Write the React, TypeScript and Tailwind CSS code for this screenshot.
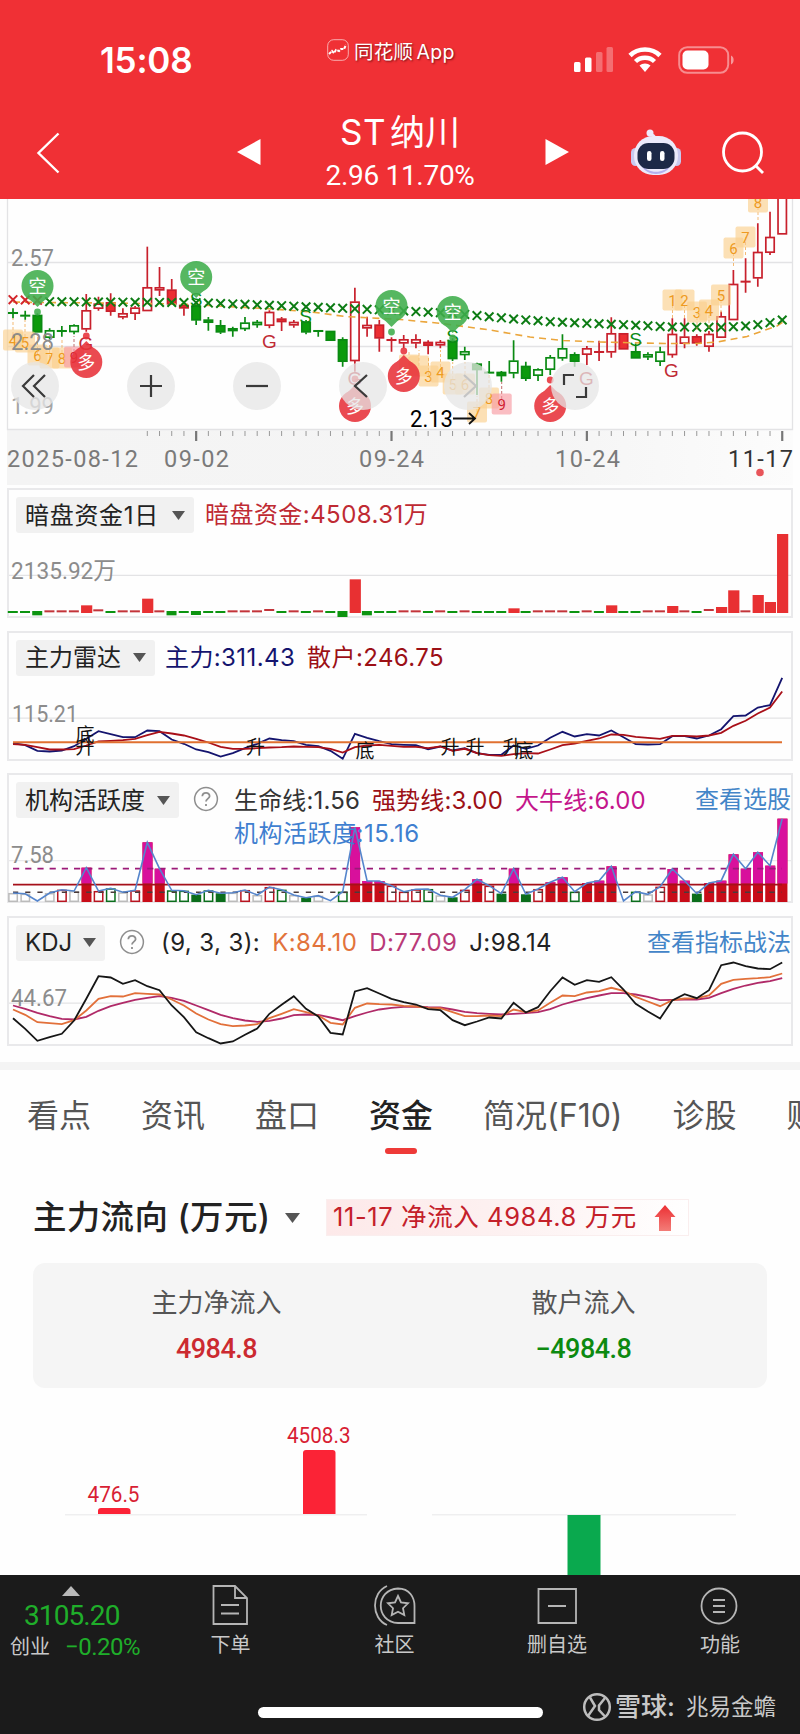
import type { ReactNode } from "react";

const RED = "#c8202c";
const GREEN = "#0a8a12";

// every chart shares the same 64 trading days
const DAYS = 64;
const dayX = (i: number) => 13 + i * 12.21;
const days = Array.from({ length: DAYS }, (_, i) => i);

type Kind = "r" | "R" | "g" | "G";
// [kind, high, top of body, bottom of body, low], in thirds of a pixel
type Candle = [Kind, number, number, number, number];

const candles: Candle[] = [
  ["G", 340, 352, 356, 370], ["G", 347, 360, 364, 374], ["G", 355, 360, 412, 412], ["g", 400, 406, 428, 432],
  ["G", 393, 406, 410, 425], ["g", 388, 391, 411, 418], ["r", 297, 346, 403, 410], ["r", 305, 326, 341, 347],
  ["R", 295, 322, 350, 362], ["r", 340, 355, 367, 373], ["r", 333, 338, 356, 375], ["r", 155, 277, 348, 348],
  ["r", 216, 277, 286, 303], ["R", 252, 284, 328, 330], ["R", 325, 330, 340, 362], ["G", 325, 332, 376, 390],
  ["G", 366, 374, 383, 407], ["G", 375, 391, 412, 417], ["g", 395, 400, 408, 425], ["g", 366, 383, 402, 408],
  ["g", 375, 381, 390, 398], ["r", 346, 351, 392, 400], ["R", 366, 371, 381, 408], ["r", 375, 381, 391, 398],
  ["G", 375, 380, 412, 418], ["G", 405, 406, 410, 425], ["G", 408, 408, 437, 437], ["G", 427, 433, 500, 515],
  ["r", 278, 320, 498, 530], ["r", 365, 390, 400, 425], ["R", 375, 389, 430, 470], ["R", 427, 433, 437, 470],
  ["r", 420, 433, 445, 460], ["r", 418, 433, 445, 460], ["R", 436, 441, 452, 478], ["r", 435, 441, 451, 460],
  ["G", 430, 437, 492, 498], ["g", 455, 469, 480, 495], ["G", 503, 506, 525, 600], ["G", 498, 531, 534, 534],
  ["G", 528, 531, 543, 560], ["g", 436, 497, 535, 550], ["G", 500, 513, 551, 558], ["g", 520, 523, 542, 558],
  ["g", 480, 487, 524, 540], ["g", 418, 460, 490, 497], ["G", 472, 478, 500, 515], ["r", 453, 460, 479, 510],
  ["R", 437, 469, 472, 498], ["r", 367, 415, 472, 488], ["R", 415, 415, 463, 463], ["G", 445, 469, 490, 490],
  ["g", 472, 478, 487, 495], ["g", 455, 470, 500, 513], ["r", 370, 417, 480, 488], ["r", 370, 425, 446, 460],
  ["R", 418, 424, 445, 452], ["r", 408, 417, 455, 470], ["r", 350, 364, 428, 428], ["r", 225, 267, 375, 375],
  ["R", 190, 258, 261, 293], ["r", 85, 171, 250, 275], ["r", 50, 126, 173, 180], ["r", -20, -20, 118, 118],
];

// trend crosses: anchors [day, y], interpolated between
const trend = [
  [0, 314], [2, 316], [3, 320], [15, 323], [22, 332], [27, 340], [31, 346], [36, 355], [41, 372],
  [44, 380], [47, 385], [50, 389], [54, 396], [58, 397], [60, 393], [61, 389], [62, 383], [63, 375],
];

function trendY(day: number) {
  const k = Math.max(1, trend.findIndex(([d]) => d >= day));
  const [d0, y0] = trend[k - 1];
  const [d1, y1] = trend[k];
  return y0 + ((y1 - y0) * (day - d0)) / (d1 - d0);
}

const toPoints = (values: number[], base: number) =>
  values.map((v, i) => `${dayX(i).toFixed(1)},${(base + v / 3).toFixed(1)}`).join(" ");

const axisFont = 'Roboto, "Noto Sans CJK SC", sans-serif';

interface LabelProps {
  x: number;
  y: number;
  w: number;
  children: string;
  fill?: string;
  size?: number;
  spaced?: boolean;
}

function AxisLabel({ x, y, w, children, fill = "#8c8c8c", size = 24, spaced }: LabelProps) {
  return (
    <text
      x={x}
      y={y}
      fontSize={size}
      fill={fill}
      fontFamily={axisFont}
      textLength={w}
      lengthAdjust={spaced ? "spacing" : "spacingAndGlyphs"}
    >
      {children}
    </text>
  );
}

function Pin({ x, y, up, dotY }: { x: number; y: number; up?: boolean; dotY?: number }) {
  const color = up ? "#e8323a" : "#3fae4c";
  const tail = up ? `M${x - 8} ${y - 13}L${x} ${y - 21}L${x + 8} ${y - 13}Z` : `M${x - 8} ${y + 13}L${x} ${y + 21}L${x + 8} ${y + 13}Z`;
  return (
    <g fill={color} opacity={0.88}>
      <circle cx={x} cy={y} r={16} />
      <path d={tail} />
      {dotY && <circle cx={x} cy={dotY} r={3.4} />}
      <text x={x} y={y + 6.5} fontSize={18} fill="#fff" textAnchor="middle" fontFamily={axisFont}>
        {up ? "多" : "空"}
      </text>
    </g>
  );
}

// nine-turn counters: [label, x, y, y of the candle it points to]
const counters: [string, number, number, number][] = [
  ["4", 13, 340, 318], ["5", 25, 342, 320], ["6", 37.5, 355, 334], ["7", 49.5, 358, 340], ["8", 62, 358, 338],
  ["9", 74, 357, 336], ["", 409, 365, 350], ["", 419, 366, 350], ["3", 428.5, 376, 356], ["4", 440.5, 372, 350],
  ["5", 452.7, 384, 362], ["6", 465, 384, 362], ["7", 477, 412, 396], ["8", 489, 398, 374], ["9", 501.7, 404, 382],
  ["1", 672.5, 300, 320], ["2", 684.5, 300, 320], ["3", 697, 312, 332], ["4", 709, 310, 330], ["5", 721, 295, 314],
  ["6", 733.5, 248, 268], ["7", 745.5, 237, 257], ["8", 758, 202, 222],
];

const marks: [string, number, number][] = [
  ["G", 86, 350], ["G", 269.5, 348], ["G", 355, 385], ["G", 586.5, 385], ["G", 671.5, 377],
  ["S", 196, 306], ["S", 305.5, 323], ["S", 452.5, 343], ["S", 635.5, 346],
];

function CandleChart() {
  const y = (v: number) => 195 + v / 3;
  return (
    <svg width="800" height="289" viewBox="0 199 800 289" className="block">
      <defs>
        <linearGradient id="axis" x1="0" x2="1" y1="0" y2="0">
          <stop offset="0" stopColor="#f4f4f4" />
          <stop offset="0.7" stopColor="#f5f5f5" />
          <stop offset="1" stopColor="#fcfcfc" />
        </linearGradient>
      </defs>
      <rect x="7" y="429" width="786" height="56" fill="url(#axis)" />
      <g fill="none" stroke="#e3e3e5" strokeWidth="1.3">
        <path d="M7.5 199V429.5H792.5V199M8 262.5H792M8 346.5H792" />
      </g>
      {days.slice(11).map((i) => {
        const major = (i + 1) % 16 === 0;
        return (
          <path
            key={i}
            d={`M${dayX(i)} 431V${major ? 441 : 436}`}
            stroke={major ? "#777" : "#999"}
            strokeWidth={major ? 2.2 : 1}
          />
        );
      })}
      {candles.map(([kind, high, top, bottom, low], i) => {
        const x = dayX(i);
        const color = kind.toLowerCase() === "r" ? RED : GREEN;
        const hollow = kind === "r" || kind === "g";
        return (
          <g key={i} stroke={color} strokeWidth="1.7">
            <path d={`M${x} ${y(high)}V${y(top)}M${x} ${y(bottom)}V${y(low)}`} />
            <rect
              x={x - 4.2}
              y={y(top) + 0.5}
              width={8.4}
              height={Math.max(0.3, (bottom - top) / 3 - 1)}
              fill={hollow ? "none" : kind === "R" ? "#ec2e32" : "#0c9a0c"}
            />
          </g>
        );
      })}
      <polyline
        points="13,302 40,302.5 110,303 180,304 265,308.5 312,312 345,316.5 400,319.5 442,323.5 490,330 530,337 563,340.5 600,342 665,343.5 697,343.5 717,342 747,336.5 777,326 783,322"
        fill="none"
        stroke="#eba63c"
        strokeWidth="1.6"
        strokeDasharray="7 5"
      />
      {days.map((i) => {
        const x = dayX(i);
        const cy = y(trendY(i));
        return (
          <path
            key={i}
            d={`M${x - 4.3} ${cy - 4.3}L${x + 4.3} ${cy + 4.3}M${x + 4.3} ${cy - 4.3}L${x - 4.3} ${cy + 4.3}`}
            stroke={i < 3 ? "#d3262b" : "#0d7c14"}
            strokeWidth="2"
          />
        );
      })}
      {counters.map(([label, x, cy, target], i) => {
        const pink = label === "9";
        return (
          <g key={i}>
            <path d={`M${x} ${cy}V${target}`} stroke={pink ? "#a33" : "#f0a03c"} strokeDasharray="3 2" opacity="0.7" />
            <rect x={x - 10} y={cy - 10.5} width="20" height="21" rx="2" fill={pink ? "#f89aa2" : "#fbcf8d"} opacity="0.65" />
            <text x={x} y={cy + 5.5} fontSize="15" textAnchor="middle" fill={pink ? "#d02030" : "#ee9a22"} fontFamily={axisFont}>
              {label}
            </text>
          </g>
        );
      })}
      {marks.map(([letter, x, by], i) => (
        <text
          key={i}
          x={x}
          y={by}
          fontSize="19"
          textAnchor="middle"
          fill={letter === "G" ? "#c02a35" : "#0b8a14"}
          fontFamily='"Liberation Sans", sans-serif'
        >
          {letter}
        </text>
      ))}
      <Pin x={37.5} y={286} dotY={312} />
      <Pin x={196.2} y={277} />
      <Pin x={391.5} y={306} dotY={332} />
      <Pin x={452.7} y={312} dotY={338} />
      <Pin x={86.3} y={362} up dotY={336} />
      <Pin x={355} y={406} up dotY={379} />
      <Pin x={403.8} y={376} up dotY={351} />
      <Pin x={550.2} y={406} up dotY={380} />
      <AxisLabel x={11} y={265.5} w={43}>2.57</AxisLabel>
      <AxisLabel x={11} y={349.5} w={43}>2.28</AxisLabel>
      <AxisLabel x={11} y={413.5} w={43} fill="#a5a5a5">1.99</AxisLabel>
      <AxisLabel x={410} y={427} w={43} fill="#000">2.13</AxisLabel>
      <path d="M453 418.5H475M469 413L475 418.5L469 424" fill="none" stroke="#111" strokeWidth="1.8" />
      <AxisLabel x={7} y={466.5} w={131} fill="#7a7a7a" size={23.5} spaced>2025-08-12</AxisLabel>
      <AxisLabel x={164} y={466.5} w={65} fill="#7a7a7a" size={23.5} spaced>09-02</AxisLabel>
      <AxisLabel x={359} y={466.5} w={65} fill="#7a7a7a" size={23.5} spaced>09-24</AxisLabel>
      <AxisLabel x={555} y={466.5} w={65} fill="#7a7a7a" size={23.5} spaced>10-24</AxisLabel>
      <AxisLabel x={728} y={466.5} w={65} fill="#333" size={23.5} spaced>11-17</AxisLabel>
      <circle cx="760" cy="472.5" r="3.8" fill="#e8555a" />
    </svg>
  );
}

const controls = [
  { name: "earlier", d: "M23 13L12 24L23 35M34 13L23 24L34 35", gap: "" },
  { name: "zoom in", d: "M24 13V35M13 24H35", gap: "ml-[68px]" },
  { name: "zoom out", d: "M13 24H35", gap: "ml-[58px]" },
  { name: "previous", d: "M28 13L16 24L28 35", gap: "ml-[58px]" },
  { name: "next", d: "M20 13L32 24L20 35", gap: "ml-[57px]", off: true },
  { name: "full screen", d: "M23 13H13V23M25 35H35V25", gap: "ml-[59px]" },
];

function ChartControls() {
  return (
    <div className="absolute left-[11px] top-[163px] flex">
      {controls.map((c) => (
        <button key={c.name} aria-label={c.name} className={`size-12 rounded-full bg-[#e6e6e6]/75 ${c.gap}`}>
          <svg width="48" height="48" fill="none" stroke={c.off ? "#c4c4c4" : "#3a3a3a"} strokeWidth="2.2">
            <path d={c.d} />
          </svg>
        </button>
      ))}
    </div>
  );
}

interface PanelProps {
  title: string;
  chip: string;
  top: number;
  help?: boolean;
  legend: ReactNode;
  link?: string;
  children: ReactNode;
}

function Panel({ title, chip, top, help, legend, link, children }: PanelProps) {
  return (
    <section className="mx-[7px] grid h-[130px] border-2 border-[#e9e9eb]">
      <svg width="782" height="126" viewBox={`9 ${top} 782 126`} className="overflow-visible [grid-area:1/1]">
        {children}
      </svg>
      <div className="z-10 flex h-[50px] items-start whitespace-nowrap pl-[7px] pt-[7px] text-[24px] leading-[35px] [grid-area:1/1]">
        <button className={`flex h-9 shrink-0 items-center justify-between rounded-[3px] bg-[#f1f1f1] px-[9px] text-[#222] ${chip}`}>
          {title}
          <svg width="13" height="9" fill="#555">
            <path d="M0 0H13L6.5 9Z" />
          </svg>
        </button>
        {help && (
          <svg width="26" height="26" className="ml-[14px] mt-[4px] shrink-0" fill="none" stroke="#8e8e8e" strokeWidth="1.5">
            <circle cx="13" cy="13" r="11.4" />
            <path d="M9.3 10.3C9.5 5.7 16.8 5.8 16.6 10.3C16.5 12.6 13 12.8 13 15.6M13 18V20" strokeWidth="1.8" />
          </svg>
        )}
        {legend}
        {link && <a className="ml-auto text-[#4385c8]">{link}</a>}
      </div>
    </section>
  );
}

const fundKinds = "gggrrrrrgrrrrgggggrrrrgrgrggrgggrrgrgrgggrgrrrgrgrggrrrrgrrrrrrr";
// bars that stand out of the flat row: day -> edge
const fundPeaks: Record<number, number> = {
  2: 391, 6: 361, 7: 373, 11: 341, 13: 391, 15: 390, 21: 372, 27: 396, 28: 283, 29: 391, 41: 370,
  49: 361, 54: 363, 57: 372, 58: 366, 59: 316, 61: 330, 62: 351, 63: 147,
};

function FundBars() {
  return (
    <>
      <path d="M9 575.3H791" stroke="#e3e3e5" strokeWidth="1.2" />
      {days.map((i) => {
        const red = fundKinds[i] === "r";
        const peak = fundPeaks[i];
        const tall = red && peak !== undefined && peak < 371;
        const y0 = red ? (peak ?? 376) : 378;
        const y1 = red ? (tall ? 384 : y0 + 6) : (peak ?? 384);
        return (
          <rect
            key={i}
            x={dayX(i) - 5.2}
            y={485 + y0 / 3}
            width={tall ? 11.2 : 10}
            height={(y1 - y0) / 3}
            fill={red ? (tall ? "#e83032" : "#c3343a") : "#0c9410"}
          />
        );
      })}
      <AxisLabel x={11} y={579} w={105}>2135.92万</AxisLabel>
    </>
  );
}

const mainForce = [
  773, 779, 796, 798, 795, 782, 760, 737, 746, 755, 755, 735, 737, 762, 775, 792, 800, 813, 803, 788, 775, 759, 764, 767,
  778, 782, 796, 820, 745, 757, 767, 776, 778, 779, 791, 783, 795, 788, 803, 808, 808, 780, 790, 780, 757, 739, 753, 746,
  750, 735, 755, 776, 777, 776, 752, 752, 759, 750, 731, 692, 690, 666, 659, 577,
];
const retail = [
  776, 778, 785, 792, 792, 791, 780, 768, 766, 764, 760, 749, 739, 744, 750, 760, 771, 784, 790, 790, 788, 786, 785, 783,
  784, 785, 790, 801, 785, 780, 778, 781, 784, 784, 788, 783, 796, 790, 803, 809, 811, 806, 803, 804, 792, 779, 774, 766,
  759, 747, 748, 754, 757, 760, 751, 751, 753, 750, 742, 721, 706, 684, 666, 618,
];
const radarMarks: [string, number, number][] = [
  ["底", 85, 741], ["升", 85, 753], ["升", 255.5, 753], ["底", 365, 757],
  ["升", 450, 753], ["升", 475, 753], ["升", 512, 753], ["底", 524, 757],
];

function RadarLines() {
  return (
    <>
      <path d="M9 717.7H791" stroke="#e3e3e5" strokeWidth="1.2" />
      <AxisLabel x={12} y={721} w={66}>115.21</AxisLabel>
      <g fill="none" strokeWidth="1.8">
        <polyline points={toPoints(mainForce, 485)} stroke="#14146e" />
        <polyline points={toPoints(retail, 485)} stroke="#a80f18" />
        <path d="M13 741.7H782" stroke="#e07030" strokeWidth="2" />
      </g>
      {radarMarks.map(([t, x, y], i) => (
        <text key={i} x={x} y={y} fontSize="19" fill="#111" textAnchor="middle" fontFamily={axisFont}>
          {t}
        </text>
      ))}
    </>
  );
}

// w: idle, r/g: hollow, R/G: filled, -: no bar
const activityKinds = "ww-wrwRrgwrRRggGgGwrwrgwGw-gRRRrrrgwGrRrGRGrRRgRRR-gwrRRGRRRRRRR";
const activity = [
  384, 386, 408, 384, 374, 378, 308, 378, 370, 382, 376, 232, 311, 376, 377, 389, 376, 385, 383, 375, 390, 366, 374, 390,
  398, 392, 407, 380, 187, 348, 348, 362, 380, 373, 372, 391, 397, 374, 343, 362, 386, 311, 388, 372, 352, 337, 380, 354,
  347, 304, 408, 380, 388, 365, 312, 347, 386, 354, 347, 268, 311, 262, 302, 161,
];

function ActivityBars() {
  const floor = 902;
  return (
    <>
      <path d="M9 860.7H791" stroke="#e9e9eb" strokeWidth="1.2" />
      {days.map((i) => {
        const kind = activityKinds[i];
        const x = dayX(i) - 4.8;
        const top = 765 + activity[i] / 3;
        if (kind === "-") return null;
        if (kind === "R") {
          return (
            <g key={i}>
              <rect x={x} y={top} width="10" height={floor - top} fill="#c80c18" />
              <rect x={x} y={top} width="10" height={Math.max(0, 883.5 - top)} fill="#d8109c" />
            </g>
          );
        }
        const color = kind === "w" ? "#bbb" : kind === "r" ? "#b81420" : "#0b6e1c";
        return (
          <rect
            key={i}
            x={x + 0.7}
            y={top + 0.7}
            width="8.4"
            height={floor - top - 1.4}
            fill={kind === "G" ? color : "#fff"}
            stroke={color}
            strokeWidth="1.5"
          />
        );
      })}
      <path d="M13 868.7H782" stroke="#9c1a78" strokeWidth="1.8" strokeDasharray="6.2 6" />
      <path d="M13 884.7H782" stroke="#a5101a" strokeWidth="1.8" />
      <path d="M13 892.3H782" stroke="#4a3a3a" strokeWidth="1.4" strokeDasharray="5.2 7" />
      <polyline points={toPoints(activity, 765)} fill="none" stroke="#5585cc" strokeWidth="1.6" />
      <AxisLabel x={11} y={863} w={43}>7.58</AxisLabel>
    </>
  );
}

const kLine = [
  732, 748, 770, 773, 776, 764, 735, 700, 692, 693, 683, 685, 687, 702, 720, 744, 762, 776, 782, 780, 776, 758, 745, 731,
  740, 750, 772, 777, 727, 714, 716, 717, 721, 723, 727, 728, 740, 752, 752, 750, 752, 732, 740, 735, 712, 690, 692, 681,
  677, 667, 676, 694, 708, 722, 704, 699, 698, 690, 655, 643, 640, 638, 635, 624,
];
const dLine = [
  720, 730, 742, 752, 760, 762, 754, 736, 722, 712, 703, 697, 692, 697, 706, 720, 734, 748, 758, 765, 769, 766, 759, 749,
  747, 748, 756, 764, 752, 741, 732, 727, 724, 723, 725, 726, 732, 739, 743, 745, 747, 745, 743, 740, 731, 717, 707, 698,
  690, 683, 683, 687, 694, 704, 703, 702, 702, 697, 683, 670, 660, 652, 647, 638,
];
const jLine = [
  758, 790, 826, 815, 805, 765, 700, 632, 636, 655, 644, 662, 674, 720, 755, 800, 818, 834, 828, 808, 789, 745, 718, 692,
  730, 753, 802, 807, 678, 668, 684, 700, 710, 717, 731, 734, 764, 779, 768, 756, 759, 712, 741, 725, 677, 636, 658, 644,
  649, 635, 672, 715, 738, 759, 705, 686, 698, 674, 599, 591, 602, 609, 611, 591,
];

function KdjLines() {
  return (
    <>
      <path d="M9 1002.7H791" stroke="#e3e3e5" strokeWidth="1.2" />
      <AxisLabel x={11} y={1005.5} w={56}>44.67</AxisLabel>
      <g fill="none" strokeWidth="1.8">
        <polyline points={toPoints(dLine, 765)} stroke="#b02a68" />
        <polyline points={toPoints(kLine, 765)} stroke="#e2703a" />
        <polyline points={toPoints(jLine, 765)} stroke="#161616" />
      </g>
    </>
  );
}

function StatusBar() {
  return (
    <div className="flex h-[100px] items-start">
      <div className="ml-[100px] mt-[38px] w-[227px] text-[35px] font-semibold leading-[44px] tracking-[-0.2px]">15:08</div>
      <div className="mt-[38px] flex w-[247px] items-center gap-[5px] text-[19.5px] leading-[28px] tracking-[0.3px] [text-shadow:1px_1px_2px_#7a1015]">
        <svg width="22" height="22" className="-mt-[4px]" fill="none" stroke="#fff">
          <rect x="0.7" y="0.7" width="20.6" height="20.6" rx="6" strokeOpacity="0.6" />
          <path d="M2 15L5 12L7 14L9 11L12 12L14 10L17 10L19 6" strokeWidth="2" strokeDasharray="3 1" />
        </svg>
        <span>
          同花顺<span className="ml-[3px]">App</span>
        </span>
      </div>
      <svg width="40" height="26" className="mt-[47px]" fill="#fff">
        <rect x="0" y="15" width="6.5" height="10" rx="1.5" />
        <rect x="11" y="10.5" width="6.5" height="14.5" rx="1.5" />
        <rect x="22" y="5" width="6.5" height="20" rx="1.5" opacity="0.3" />
        <rect x="32.5" y="0" width="6.5" height="25" rx="1.5" opacity="0.3" />
      </svg>
      <svg width="34" height="26" className="ml-[14px] mt-[47px]" fill="none" stroke="#fff">
        <path d="M2 8.5C10 0.5 24 0.5 32 8.5" strokeWidth="4.6" />
        <path d="M7.5 14.5C12.5 9.5 21.5 9.5 26.5 14.5" strokeWidth="4.4" />
        <path d="M11.5 18.5C14.5 15.8 19.5 15.8 22.5 18.5L17 25Z" fill="#fff" stroke="none" />
      </svg>
      <svg width="58" height="28" className="ml-[16px] mt-[46px]">
        <rect x="1.2" y="1.2" width="49" height="25.6" rx="8" fill="none" stroke="#fff" strokeOpacity="0.45" strokeWidth="2" />
        <rect x="4.5" y="4.5" width="26" height="19" rx="5" fill="#fff" />
        <path d="M53 9.5C56.5 11 56.5 17 53 18.5Z" fill="#fff" fillOpacity="0.5" />
      </svg>
    </div>
  );
}

function Robot() {
  return (
    <svg width="50" height="48" className="block">
      <path d="M24 10C24 5 20 7 19 4" fill="none" stroke="#e9e6fb" strokeWidth="2.5" />
      <circle cx="19" cy="4" r="3.5" fill="#efe9fb" />
      <rect x="0" y="19" width="9" height="18" rx="4.5" fill="#c9c9ef" />
      <rect x="41" y="19" width="9" height="18" rx="4.5" fill="#c9c9ef" />
      <rect x="3" y="7" width="44" height="39" rx="19" fill="#eceafb" />
      <path d="M10 36C18 45 32 45 40 36C34 48 16 48 10 36Z" fill="#b4b0ee" />
      <rect x="6.500" y="14" width="37" height="26" rx="11" fill="#1d2947" />
      <rect x="16" y="22" width="4.5" height="10" rx="2.2" fill="#fff" />
      <rect x="29" y="22" width="4.5" height="10" rx="2.2" fill="#fff" />
    </svg>
  );
}

function StockHeader() {
  return (
    <header className="h-[199px] bg-[#f03035] text-white">
      <StatusBar />
      <div className="flex h-[98px] items-start">
        <svg width="24" height="44" className="ml-[36px] mt-[31px]" fill="none" stroke="#fff" strokeWidth="2.4">
          <path d="M22.5 2.5L2.5 22L22.5 41.5" />
        </svg>
        <svg width="24" height="26" className="ml-[177px] mt-[39px]" fill="#fff">
          <path d="M23.5 0V26L0 13Z" />
        </svg>
        <div className="w-[284px] pr-[6px] text-center">
          <div className="mt-[8px] text-[35px] leading-[48px]">
            <span className="mr-[4px] tracking-[0.5px]">ST</span>纳川
          </div>
          <div className="mt-[5px] font-[Roboto] text-[28px] leading-[30px] tracking-[-0.3px]">2.96 11.70%</div>
        </div>
        <svg width="24" height="26" className="mt-[39px]" fill="#fff">
          <path d="M0.5 0V26L24 13Z" />
        </svg>
        <div className="ml-[62px] mt-[29px]">
          <Robot />
        </div>
        <svg width="44" height="44" className="ml-[40px] mt-[31px]" fill="none" stroke="#fff" strokeWidth="2.8">
          <circle cx="21.5" cy="21" r="19" />
          <path d="M35 35L42 42" />
        </svg>
      </div>
    </header>
  );
}

const tabs = ["看点", "资讯", "盘口", "资金", "简况(F10)", "诊股", "财务"];

function Tabs() {
  return (
    <nav className="flex h-[97px] gap-[50px] overflow-hidden whitespace-nowrap pl-[27px] pt-[22px] text-[32px] leading-[48px] text-[#555]">
      {tabs.map((tab) => (
        <div key={tab} className="flex shrink-0 flex-col items-center">
          <span className={tab === "资金" ? "font-medium text-[#222]" : ""}>{tab}</span>
          {tab === "资金" && <span className="mt-[8px] h-[6px] w-8 rounded-full bg-[#ee3a38]" />}
        </div>
      ))}
    </nav>
  );
}

function FundFlow() {
  return (
    <section className="h-[408px] overflow-hidden pt-[32px]">
      <div className="flex h-[37px] items-center pl-[33px]">
        <h2 className="w-[252px] whitespace-nowrap text-[33.5px] font-medium tracking-[0.3px] text-[#222]">主力流向 (万元)</h2>
        <svg width="15" height="10" fill="#555">
          <path d="M0 0H15L7.5 10Z" />
        </svg>
        <div className="ml-[26px] flex h-[37px] w-[363px] items-center justify-between whitespace-nowrap border border-[#faeeee] bg-linear-to-r from-[#fde9e9] via-[#fdf1f1] to-white pl-[6px] pr-[12px] text-[25.5px] tracking-[0.6px] text-[#c4202a]">
          11-17 净流入 4984.8 万元
          <svg width="22" height="26">
            <defs>
              <linearGradient id="arrow" x1="0" x2="0" y1="0" y2="1">
                <stop offset="0" stopColor="#ec2f33" />
                <stop offset="1" stopColor="#f37d78" />
              </linearGradient>
            </defs>
            <path d="M11 0L21.5 12H17V26H5V12H0.5Z" fill="url(#arrow)" />
          </svg>
        </div>
      </div>
      <div className="mx-[33px] mt-[27px] grid h-[125px] grid-cols-2 rounded-xl bg-[#f5f5f5] pt-[20px] text-center">
        <div>
          <div className="text-[26px] leading-[40px] text-[#555]">主力净流入</div>
          <div className="mt-[8px] font-[Roboto] text-[27px] font-medium leading-[36px] tracking-[-0.5px] text-[#cc2a30]">4984.8</div>
        </div>
        <div>
          <div className="text-[26px] leading-[40px] text-[#555]">散户流入</div>
          <div className="mt-[8px] font-[Roboto] text-[27px] font-medium leading-[36px] tracking-[-0.5px] text-[#0d8a10]">−4984.8</div>
        </div>
      </div>
      <svg width="800" height="188" viewBox="0 1388 800 188" className="block">
        <path d="M65 1514.7H367M432 1514.7H736" stroke="#efeff0" strokeWidth="1.5" />
        <path d="M98 1514V1511Q98 1508 101 1508H127Q130.5 1508 130.5 1511V1514Z" fill="#fb2336" />
        <path d="M303 1514V1453Q303 1450 306 1450H332.5Q335.5 1450 335.5 1453V1514Z" fill="#fb2336" />
        <rect x="567.5" y="1515" width="33" height="61" fill="#0aa94e" />
        <AxisLabel x={87.5} y={1501.5} w={52} size={21.5} fill="#d81e34">476.5</AxisLabel>
        <AxisLabel x={287} y={1443} w={63.5} size={21.5} fill="#d81e34">4508.3</AxisLabel>
      </svg>
    </section>
  );
}

const actions = [
  { label: "下单", width: "w-[153px]", icon: <path d="M3.5 1H25L37 13V39H3.5ZM25 1V13H37M11 20H29M11 28.5H29" /> },
  {
    label: "社区",
    width: "w-[175px]",
    icon: (
      <>
        <path d="M13 1C-3 8 -3 33 13 40" />
        <path d="M24 3.5C36 3.5 40.5 13 40.5 21V38H24C1 37 1 4.5 24 3.5Z" />
        <path d="M24 11L27 17.5L34 18.3L29 23.2L30.3 30L24 26.7L17.7 30L19 23.2L14 18.3L21 17.5Z" />
      </>
    ),
  },
  { label: "删自选", width: "w-[150px]", icon: <path d="M2.5 4H40V38H2.5ZM12 21H30" /> },
  {
    label: "功能",
    width: "w-[176px]",
    icon: (
      <>
        <circle cx="20" cy="21" r="17.5" />
        <path d="M14 15H26M14 21H26M14 27H26" />
      </>
    ),
  },
];

function BottomBar() {
  return (
    <footer className="h-[159px] bg-[#1b1b1b] text-[#c9c9c9]">
      <div className="flex h-[112px]">
        <div className="w-[154px] shrink-0 pl-[10px] pt-[11px]">
          <svg width="18" height="10" className="ml-[52px] block" fill="#b9b9b9">
            <path d="M9 0L18 10H0Z" />
          </svg>
          <div className="mt-[4px] pl-[14px] font-[Roboto] text-[28px] leading-[32px] tracking-[-0.9px] text-[#1fae2a]">3105.20</div>
          <div className="flex items-center gap-[15px] text-[20px] leading-[30px]">
            创业
            <span className="font-[Roboto] text-[24px] tracking-[-0.5px] text-[#1fae2a]">−0.20%</span>
          </div>
        </div>
        {actions.map((a) => (
          <button key={a.label} className={`flex shrink-0 flex-col items-center pt-[10px] text-[20px] leading-[28px] ${a.width}`}>
            <svg width="42" height="42" fill="none" stroke="#b5b5b5" strokeWidth="1.8">
              {a.icon}
            </svg>
            <span className="mt-[4px]">{a.label}</span>
          </button>
        ))}
      </div>
      <div className="flex items-start">
        <div className="ml-[258px] mt-[20px] h-[11px] w-[285px] shrink-0 rounded-full bg-white" />
        <svg width="30" height="30" className="ml-[39px] mt-[5px] shrink-0" fill="none" stroke="#bdbdbd" strokeWidth="2.5">
          <circle cx="15" cy="15" r="12.8" />
          <path d="M8 5.5L13 14L6 24M23 6L17 13.5V18L23 24.5" />
        </svg>
        <span className="ml-[3px] whitespace-nowrap text-[26px] font-medium leading-[40px]">雪球:</span>
        <span className="ml-[11px] whitespace-nowrap text-[22.5px] leading-[40px]">兆易金蟾</span>
      </div>
    </footer>
  );
}

export default function App() {
  return (
    <div className='h-[1734px] w-[800px] overflow-hidden bg-[#fefefe] font-[Inter,"Noto_Sans_CJK_SC",sans-serif]'>
      <StockHeader />
      <div className="relative">
        <CandleChart />
        <ChartControls />
      </div>
      <div className="flex h-[574px] flex-col gap-[12.5px]">
        <Panel
          title="暗盘资金1日"
          chip="w-[178px] tracking-[0.7px]"
          top={490}
          legend={<span className="ml-[11px] tracking-[0.45px] text-[#bf2a33]">暗盘资金:4508.31万</span>}
        >
          <FundBars />
        </Panel>
        <Panel
          title="主力雷达"
          chip="w-[139px]"
          top={632.5}
          legend={
            <>
              <span className="ml-[10px] tracking-[0.4px] text-[#14146e]">主力:311.43</span>
              <span className="ml-[12px] tracking-[0.4px] text-[#9c1016]">散户:246.75</span>
            </>
          }
        >
          <RadarLines />
        </Panel>
        <Panel
          title="机构活跃度"
          chip="w-[163px]"
          top={775}
          help
          link="查看选股"
          legend={
            <div className="ml-[15px] mt-[2px] leading-[33px]">
              <div className="flex gap-[12px] tracking-[0.15px] text-[#333]">
                <span>生命线:1.56</span>
                <span className="text-[#9c1016]">强势线:3.00</span>
                <span className="text-[#c4168c]">大牛线:6.00</span>
              </div>
              <div className="tracking-[0.5px] text-[#3f7fd0]">机构活跃度:15.16</div>
            </div>
          }
        >
          <ActivityBars />
        </Panel>
        <Panel
          title="KDJ"
          chip="w-[89px]"
          top={917.5}
          help
          link="查看指标战法"
          legend={
            <div className="ml-[16px] flex gap-[12px] tracking-[0.4px] text-[#222]">
              <span>(9, 3, 3):</span>
              <span className="text-[#e2733c]">K:84.10</span>
              <span className="text-[#b93a78]">D:77.09</span>
              <span>J:98.14</span>
            </div>
          }
        >
          <KdjLines />
        </Panel>
      </div>
      <div className="h-[8px] bg-[#f4f4f4]" />
      <Tabs />
      <FundFlow />
      <BottomBar />
    </div>
  );
}
